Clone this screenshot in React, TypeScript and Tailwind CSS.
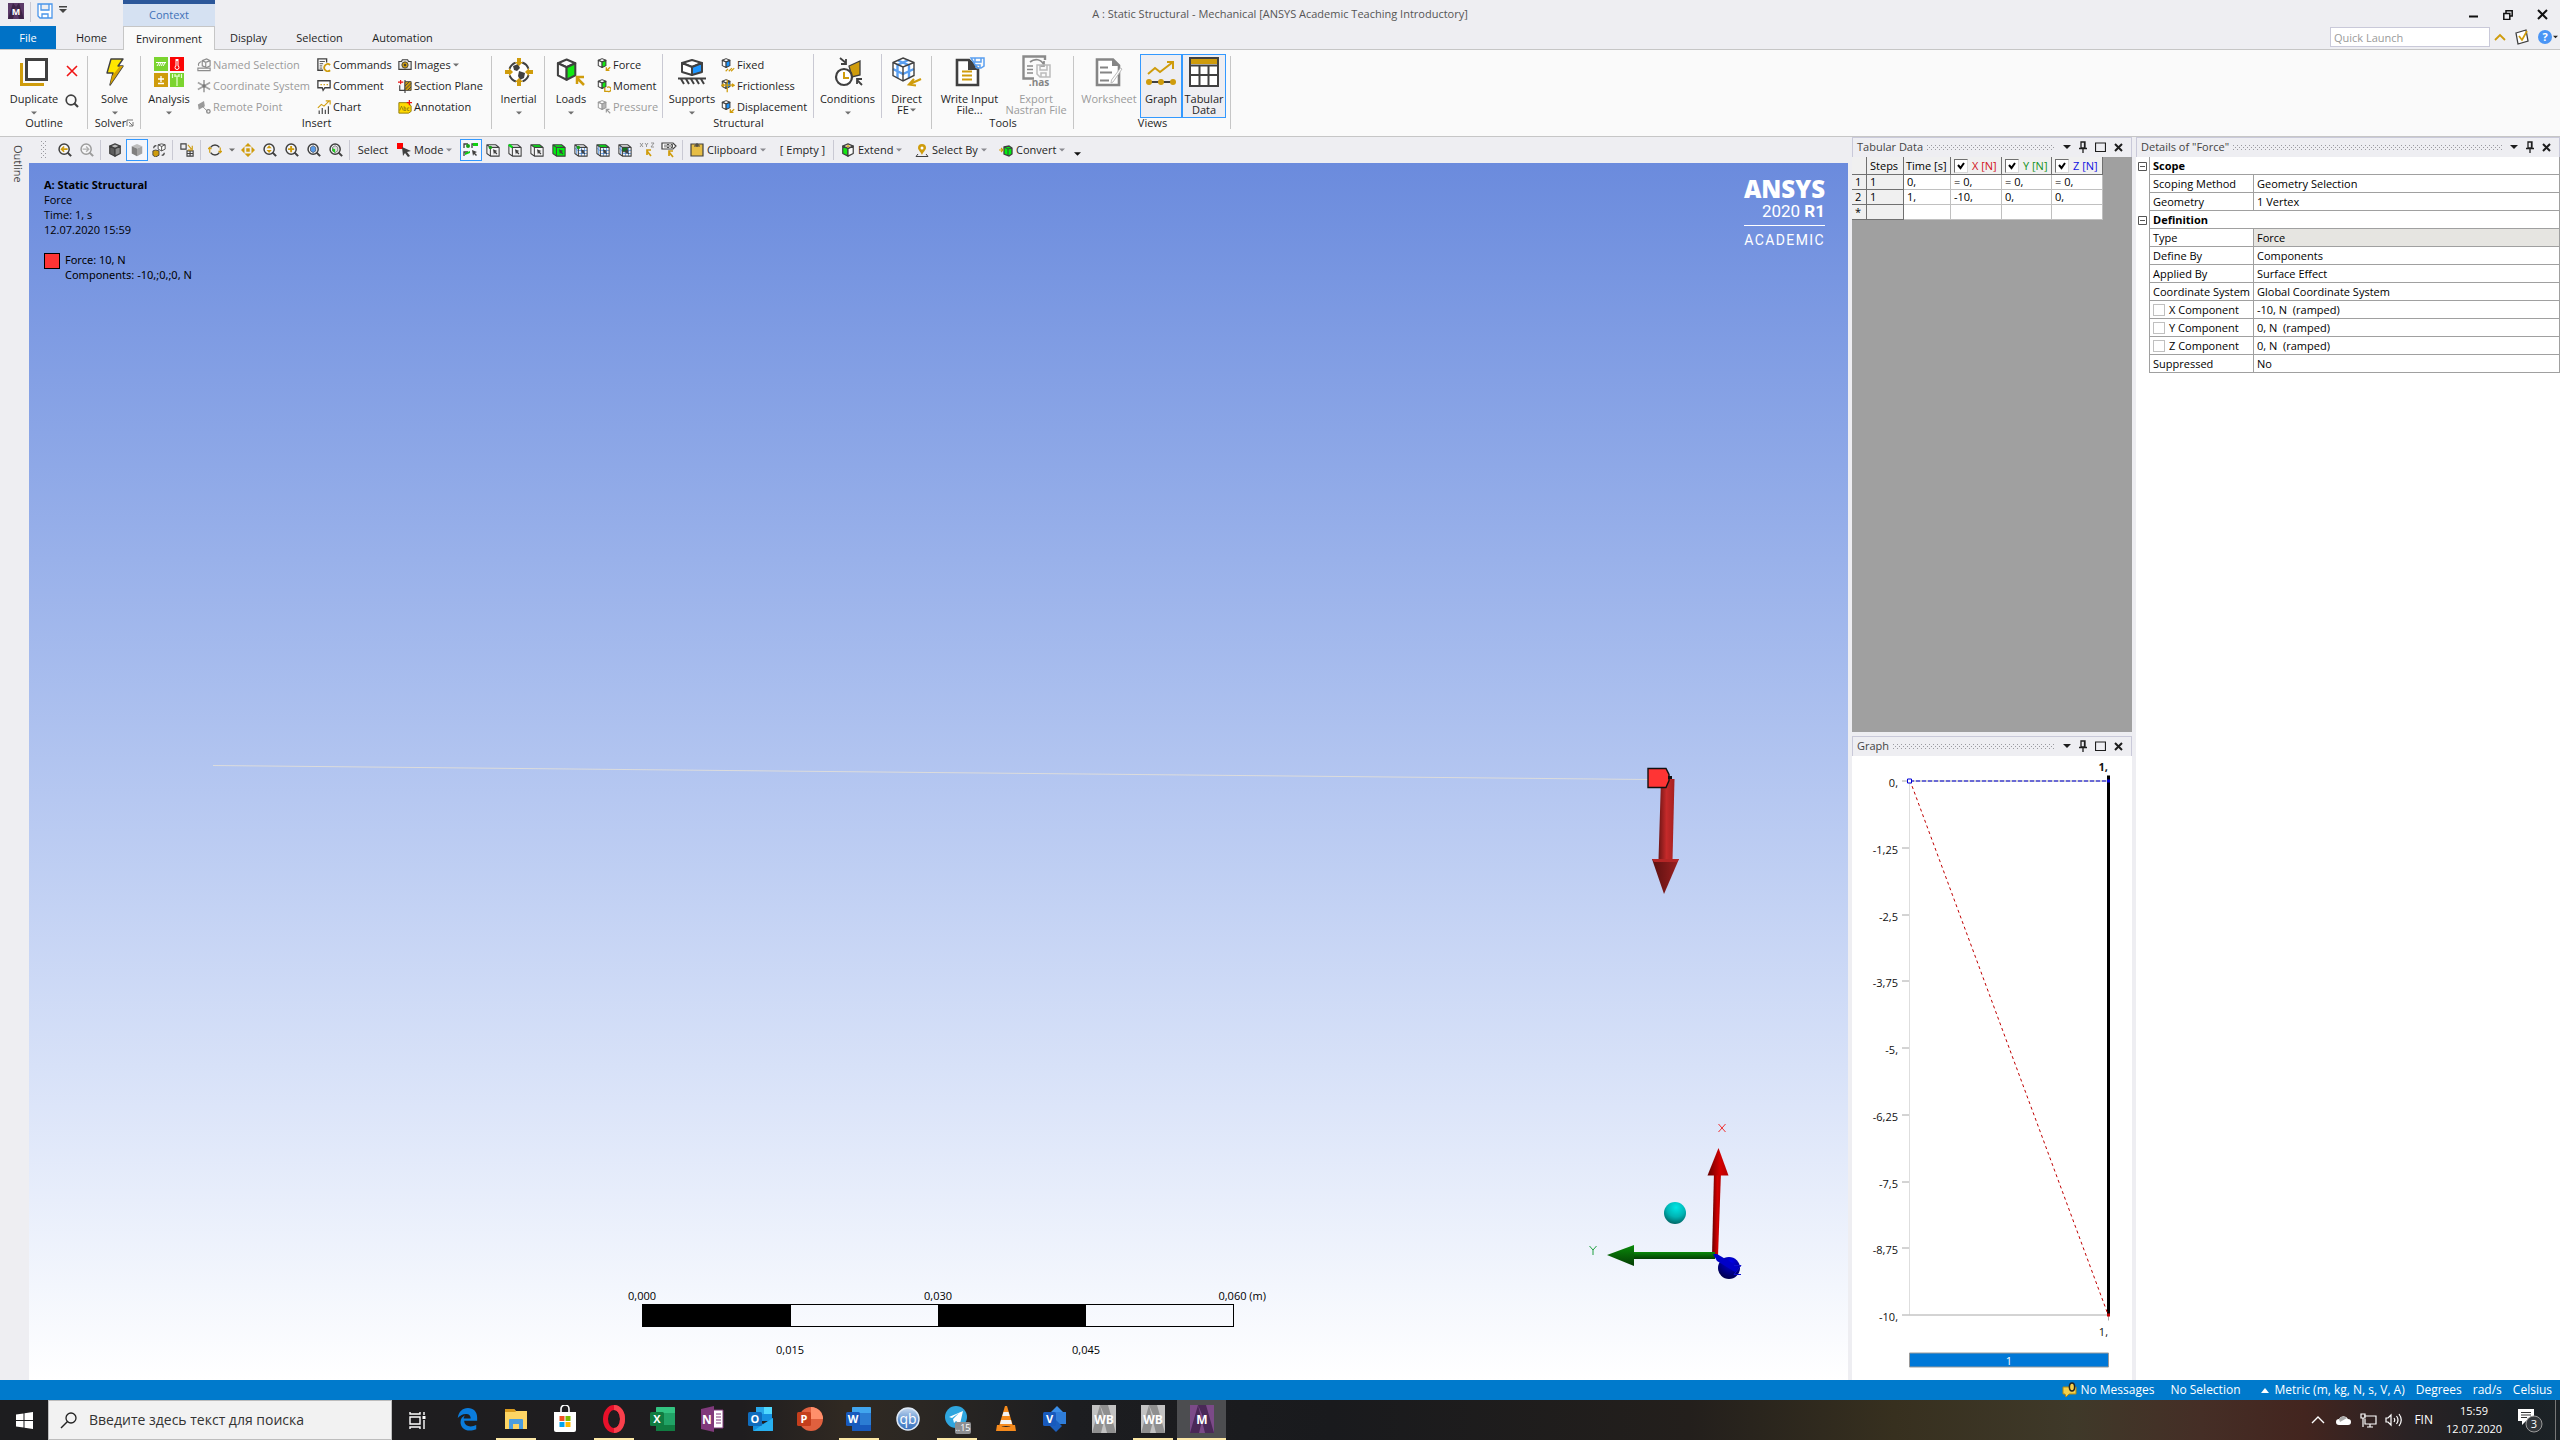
import React from "react";

const INK = "#404040";
const GOLD = "#cf9c0c";
const GREEN = "#12e812";
const BLUE = "#1e96ff";

type Kids = { children?: React.ReactNode };

function Svg({ w, h, vb, children }: Kids & { w: number; h?: number; vb?: string }) {
  const hh = h ?? w;
  return (
    <svg width={w} height={hh} viewBox={vb ?? `0 0 ${w} ${hh}`} fill="none" className="block shrink-0" aria-hidden="true">
      {children}
    </svg>
  );
}

function Caret({ color = "#6f6f6f", w = 7 }: { color?: string; w?: number }) {
  return (
    <svg width={w} height={4} viewBox="0 0 8 4" className="block shrink-0" aria-hidden="true">
      <path d="M0 0h8L4 4z" fill={color} />
    </svg>
  );
}

/* ---------- cube family ---------- */

function CubeShape({ top = "#fafafa", left = "#fafafa", right = "#fafafa", stroke = INK, sw = 1.4 }: { top?: string; left?: string; right?: string; stroke?: string; sw?: number }) {
  return (
    <g stroke={stroke} strokeWidth={sw} strokeLinejoin="round">
      <path d="M8 1l6 2.6L8 6.4 2 3.6z" fill={top} />
      <path d="M2 3.6l6 2.8V15l-6-3z" fill={left} />
      <path d="M14 3.6L8 6.4V15l6-3z" fill={right} />
    </g>
  );
}

function SmallCube({ right, disabled, kind }: { right: string; disabled?: boolean; kind: "arrow" | "turn" | "ground" | "press" | "slide" }) {
  const c = disabled ? "#9a9a9a" : GOLD;
  return (
    <Svg w={14} vb="0 0 18 18">
      <g transform="scale(.82)">
        <CubeShape right={right} stroke={disabled ? "#9a9a9a" : INK} sw={1.6} />
      </g>
      {kind === "arrow" && <path d="M17 12l-5 4m0-4v4h4" stroke={c} strokeWidth="1.7" />}
      {kind === "turn" && <path d="M10 11v5h4a3 3 0 1 0-1-5" stroke={c} strokeWidth="1.7" />}
      {kind === "ground" && <path d="M6 17l3-3m1 3l4-4m-1 4l4-4" stroke={c} strokeWidth="1.5" />}
      {kind === "press" && <path d="M17 17l-5-5m0 4v-4h4" stroke={c} strokeWidth="1.5" />}
      {kind === "slide" && <path d="M1 8h16M8 1v16m6-11l3 2-3 2M4 6L1 8l3 2" stroke={c} strokeWidth="1.6" />}
    </Svg>
  );
}

const Cursor = ({ x = 7, y = 7, c = INK }: { x?: number; y?: number; c?: string }) => (
  <path transform={`translate(${x} ${y})`} d="M0 0l5 2-2 1 2 2-1 1-2-2-1 2z" fill={c} />
);

function PickCube({ kind }: { kind: "vertex" | "edge" | "face" | "body" | "node" | "nface" | "element" }) {
  const mesh = kind === "node" || kind === "nface" || kind === "element";
  return (
    <Svg w={14} vb="0 0 16 16">
      <path d="M1 2h10l4 3v10H5l-4-3z" fill={kind === "body" ? "#00f010" : "#f4f4f6"} />
      {(kind === "face" || kind === "nface") && <path d="M1 2h10l4 3H5z" fill="#00f010" />}
      {mesh && <path d="M5 8.500h10M5 12h10M8.500 5v10M12 5v10M3 3.500V13M1 6l4 3" stroke="#5a9ae8" strokeWidth="1" />}
      <path d="M1 2h10l4 3v10H5l-4-3zM1 2l4 3h10M5 5v10" stroke={INK} strokeWidth="1.200" strokeLinejoin="round" />
      {(kind === "vertex" || kind === "node") && <circle cx="5" cy="5" r="2" fill="#1a9c1a" />}
      {kind === "edge" && <path d="M1 2l4 3" stroke="#00e010" strokeWidth="2.600" />}
      {kind === "element" && <path d="M5 5h6v5H5z" fill="#0f7a1f" stroke={INK} />}
      <Cursor x={8} y={7} />
    </Svg>
  );
}

function Lens({ children, gray }: Kids & { gray?: boolean }) {
  const c = gray ? "#9c9c9c" : INK;
  return (
    <Svg w={14} vb="0 0 16 16">
      <circle cx="7" cy="7" r="5.800" stroke={c} strokeWidth="1.700" fill="#f6f6f8" />
      <path d="M11 11l4 4" stroke={c} strokeWidth="2.400" />
      {children}
    </Svg>
  );
}

/* ---------- ribbon icons ---------- */

const DuplicateIcon = () => (
  <Svg w={30}>
    <path d="M2.500 6v21.500H25" stroke={GOLD} strokeWidth="3" />
    <path d="M7.500 2.500h20v20h-20z" stroke={INK} strokeWidth="3" fill="#fff" />
  </Svg>
);
const SolveIcon = () => (
  <Svg w={20} h={30}>
    <path d="M6 2h12l-5 7h5L5 28l3-12H2z" fill="#ffe600" stroke={INK} strokeWidth="1.400" strokeLinejoin="round" />
    <path d="M15 9h3L5 28l2-9z" fill="#d8a400" />
  </Svg>
);
const AnalysisIcon = () => (
  <Svg w={30}>
    <path d="M0 0h14v14H0z" fill="#7bd42f" />
    <path d="M16 0h14v14H16z" fill="#fb0505" />
    <path d="M0 16h14v14H0z" fill="#cf9c0c" />
    <path d="M16 16h14v14H16z" fill="#7bd42f" />
    <path d="M2 5.500h10M3 9l2-3m0 3l2-3m0 3l2-3m0 3l2-3" stroke="#fff" />
    <path d="M23 2v7" stroke="#fff" strokeWidth="3" />
    <circle cx="23" cy="10.500" r="2" stroke="#fff" fill="#fb0505" />
    <path d="M23 4v6" stroke="#fb0505" />
    <path d="M4 22h6M7 19v6M4 26.500h6" stroke="#fff" strokeWidth="1.300" />
    <path d="M18.500 17v4m2.500-4v3m6.500-3v4M25 17v3M23 19v10M21 19h4" stroke="#e6ffd0" strokeWidth="1.200" />
  </Svg>
);
const InertialIcon = () => (
  <Svg w={30}>
    <circle cx="15" cy="15" r="10" stroke={INK} strokeWidth="2" fill="#fff" strokeDasharray="9 6.700" strokeDashoffset="-3" />
    <path d="M9 9l5-2 2 4-3 3-3-1zM15 14l6 2-1 5-4 2-2-4z" fill={INK} />
    <path d="M13 1h4v5h-4zM13 24h4v5h-4zM1 13h5v4H1zM24 13h5v4h-5z" fill={GOLD} />
    <path d="M11 5h8l-4 4zM11 25h8l-4-4zM5 11v8l4-4zM25 11v8l-4-4z" fill={GOLD} />
  </Svg>
);
const LoadsIcon = () => (
  <Svg w={30}>
    <g transform="translate(-1 1) scale(1.45)">
      <CubeShape right={GREEN} />
    </g>
    <path d="M28 28l-7-7m0 6v-7h7" stroke={GOLD} strokeWidth="2.500" />
  </Svg>
);
const SupportsIcon = () => (
  <Svg w={30}>
    <g stroke={INK} strokeWidth="2" strokeLinejoin="round">
      <path d="M15 3l10 3-10 4L5 6z" fill="#fff" />
      <path d="M5 6l10 4v8L5 15z" fill="#fff" />
      <path d="M25 6l-10 4v8l10-3z" fill={BLUE} />
      <path d="M1 21.500h28M4 22l3 5m2-5l3 5m2-5l3 5m2-5l3 5m2-5l3 5" />
    </g>
  </Svg>
);
const ConditionsIcon = () => (
  <Svg w={30}>
    <path d="M16 9l11-5v14l-8 2z" fill={GOLD} stroke={INK} strokeWidth="1.300" />
    <circle cx="11" cy="20" r="8" fill="#fff" stroke={INK} strokeWidth="2.200" />
    <path d="M11 15v6h5" stroke={GOLD} strokeWidth="2" />
    <path d="M7 1l6 5m0-4v5H8M29 28l-5-5m0 4v-5h5" stroke={INK} strokeWidth="1.800" />
  </Svg>
);
const DirectIcon = () => (
  <Svg w={30}>
    <path d="M11 1l11 4.500v13L11 24 1 18.500v-13z" fill="#fff" />
    <path d="M6 3.500l11 4.700v13M16.500 3L5.500 8v13M1 12l10 5 11-5" stroke="#5a9ff0" strokeWidth="2.400" />
    <path d="M11 1l11 4.500v13L11 24 1 18.500v-13zM1 5.500L11 10l11-4.500M11 10v14" stroke={INK} strokeWidth="1.400" />
    <path d="M29 22l-11 5m4-5l-5 5.500 7 1" stroke={GOLD} strokeWidth="2.200" />
  </Svg>
);
const WriteIcon = () => (
  <Svg w={30}>
    <path d="M2 3h12l9 9v16H2z" fill="#fff" stroke={INK} strokeWidth="2.600" />
    <path d="M13 3h2l8 8v2H13z" fill={INK} />
    <path d="M7 14.500h10M7 18.500h10M7 22.500h10" stroke={GOLD} strokeWidth="1.800" />
    <path d="M16 1h13v8l-3 2h-4zM20 1v4h6V1M21 11V8h4v3" stroke="#5a9ff0" strokeWidth="1.500" />
  </Svg>
);
const NastranIcon = () => (
  <svg width="30" height="32" viewBox="0 0 30 32" fill="none" className="block shrink-0 overflow-visible" aria-hidden="true">
    <path d="M24 5V1.500H2.500v22H13" stroke="#8a8a8a" strokeWidth="2.400" />
    <path d="M6 11h6M6 14.500h6M6 18h6M9 7c5-4 11-3 14 3m0-4v5h-5" stroke="#8a8a8a" strokeWidth="1.700" />
    <path d="M16 10h13v12H19l-3-3zM19 10v5h7v-5M20 22v-4h5v4" stroke="#bcbcbc" strokeWidth="1.500" fill="#fafafa" />
    <text x="18" y="31" textAnchor="middle" fontSize="10" fontWeight="700" fill="#858585" fontFamily="Open Sans, sans-serif">.nas</text>
  </svg>
);
const WorksheetIcon = () => (
  <Svg w={30}>
    <path d="M3 2.500h16l6 6V28H3z" fill="#fff" stroke="#858585" strokeWidth="2.600" />
    <path d="M18 2v7h7z" fill="#858585" />
    <path d="M6 10.500h8M6 15.500h12M6 23.500h9" stroke="#858585" strokeWidth="1.800" />
    <path d="M28 12l-9 13-2 1 .5-3 9-12z" fill="#fff" stroke="#bcbcbc" />
  </Svg>
);
const GraphIcon = () => (
  <Svg w={30}>
    <path d="M2 17l7-6 5 4 13-10M21 5h6v7" stroke={GOLD} strokeWidth="2" />
    <path d="M3 25h24" stroke={INK} strokeWidth="2" />
    <circle cx="3" cy="25" r="3" fill={GOLD} />
    <circle cx="15" cy="25" r="3" fill={GOLD} />
    <circle cx="27" cy="25" r="3" fill={GOLD} />
  </Svg>
);
const TableIcon = () => (
  <Svg w={30}>
    <path d="M1 1h28v28H1z" fill="#fff" stroke={INK} strokeWidth="2" />
    <path d="M2 2h26v5H2z" fill={GOLD} />
    <path d="M1 8.500h28M1 18h28M10.500 9v19M19.500 9v19" stroke={INK} strokeWidth="2" />
  </Svg>
);

const NamedSel = () => (
  <Svg w={14} vb="0 0 16 16">
    <path d="M6 3l5-2 4 2v6l-4 2-5-2zM6 3l4 2 5-2M10 5v6" stroke="#8d8d8d" strokeWidth="1.300" />
    <path d="M5 4C2 5 1 7 2 9M1 11.500h14v3H1z" stroke="#8d8d8d" strokeWidth="1.300" />
  </Svg>
);
const CoordSys = () => (
  <Svg w={14} vb="0 0 16 16">
    <path d="M8 1v14M1 4l14 8M15 4L1 12" stroke="#a4a4a4" strokeWidth="2" />
    <circle cx="8" cy="8" r="2" fill="#777" />
  </Svg>
);
const RemotePt = () => (
  <Svg w={14} vb="0 0 16 16">
    <path d="M1 5l7-4 1 6-7 4z" fill="#9a9a9a" />
    <path d="M6 7l6 6" stroke="#888" />
    <circle cx="13" cy="13" r="2" stroke="#888" strokeWidth="1.400" />
  </Svg>
);
const CommandsIcon = () => (
  <Svg w={14} vb="0 0 16 16">
    <path d="M11 5V1H1v13h6" stroke={INK} strokeWidth="1.500" />
    <path d="M3 4h6M3 6.500h4M3 9h3M3 11.500h3" stroke={INK} />
    <path d="M15 8a4 4 0 1 0 0 6" stroke={GOLD} strokeWidth="2" />
  </Svg>
);
const CommentIcon = () => (
  <Svg w={14} vb="0 0 16 16">
    <path d="M1 2h14v8H9l-2 3-1-3H1z" stroke={INK} strokeWidth="1.500" fill="#fff" />
    <path d="M4 6.500h1.500m2 0H9m2 0h1.500" stroke={GOLD} strokeWidth="1.300" />
  </Svg>
);
const ChartIcon = () => (
  <Svg w={14} vb="0 0 16 16">
    <path d="M2.500 16v-4m3.500 4V9m3.500 7v-5m3.500 5V7" stroke={INK} strokeWidth="1.300" />
    <path d="M1 9l4-4 3 2 6-6m-4 0h5v4" stroke={GOLD} strokeWidth="1.300" />
  </Svg>
);
const ImagesIcon = () => (
  <Svg w={14} vb="0 0 16 16">
    <path d="M1 4h3l1-2h6l1 2h3v9H1z" stroke={INK} strokeWidth="1.300" fill="#eee" />
    <circle cx="8" cy="8" r="3.600" fill={GOLD} stroke={INK} />
    <circle cx="8" cy="8" r="1.400" fill={INK} />
  </Svg>
);
const SectionIcon = () => (
  <Svg w={14} vb="0 0 16 16">
    <path d="M2 7v6h6M8 1v15" stroke={INK} strokeWidth="1.300" />
    <path d="M8 3h7v10H8z" fill={GOLD} stroke={INK} />
    <path d="M8 8l5-5M8 12l7-7M11 13l4-4" stroke={INK} />
    <path d="M0 3.500h6M3 1v5" stroke="#e11" strokeWidth="1.300" />
  </Svg>
);
const AnnotationIcon = () => (
  <Svg w={14} vb="0 0 16 16">
    <path d="M1 3h11l3 4v6L12 15H1z" fill="#ffd900" stroke="#8a7300" />
    <path d="M2 12l2-5 2 5m1-5v5h2V9H7m6 0h-2v3h2" stroke="#7d6a10" strokeWidth=".8" />
    <path d="M10 3h6M13 0v6" stroke="#e11" strokeWidth="1.400" />
  </Svg>
);

/* ---------- ribbon pieces ---------- */

function BigButton({ icon, lines, caret, inlineCaret, disabled, active, width }: { icon: React.ReactNode; lines: string[]; caret?: boolean; inlineCaret?: boolean; disabled?: boolean; active?: boolean; width: string }) {
  return (
    <button
      disabled={disabled}
      className={`flex h-16 shrink-0 flex-col items-center border whitespace-nowrap ${width} ${active ? "border-[#3399ff] bg-[#eeeef2]" : "border-transparent"} ${disabled ? "text-[#9a9a9a]" : "text-[#1e1e1e]"}`}
    >
      <span className="flex h-8 items-end">{icon}</span>
      <span className="mt-[5px] flex flex-col items-center pt-px leading-[11px]">
        {lines.map((l, i) => (
          <span key={l} className="flex items-center gap-px">
            {l}
            {inlineCaret && i === lines.length - 1 && <Caret w={6} />}
          </span>
        ))}
      </span>
      {caret && (
        <span className="mt-[7px]">
          <Caret w={6} />
        </span>
      )}
    </button>
  );
}

function SmallButton({ icon, label, disabled, caret }: { icon: React.ReactNode; label: string; disabled?: boolean; caret?: boolean }) {
  return (
    <button disabled={disabled} className={`flex h-[21px] items-center gap-0.5 whitespace-nowrap ${disabled ? "text-[#9a9a9a]" : "text-[#1e1e1e]"}`}>
      {icon}
      <span>{label}</span>
      {caret && <Caret w={6} />}
    </button>
  );
}

function Group({ title, width, children, launcher }: Kids & { title?: string; width: string; launcher?: boolean }) {
  return (
    <section className={`flex shrink-0 flex-col pt-1 ${width}`}>
      <div className="relative flex h-full flex-col after:absolute after:top-0.5 after:right-0 after:h-[73px] after:w-px after:bg-[#c6c6c6]">
        <div className="flex h-16">{children}</div>
        <div className="flex h-[10px] items-center justify-center leading-[10px] text-[#1e1e1e]">
          {title}
          {launcher && (
            <Svg w={8}>
              <path d="M1 7V1h6M3 3l4 4M7 3v4H3" stroke="#777" />
            </Svg>
          )}
        </div>
      </div>
    </section>
  );
}

const InnerSep = () => <span className="h-16 w-px shrink-0 bg-[#c9c9d3]" />;

function Ribbon() {
  return (
    <div className="flex h-[87px] shrink-0 overflow-hidden border-b border-[#c6c6c6] bg-[#fafafa]">
      <Group title="Outline" width="w-[88px]">
        <div className="flex pl-1">
          <BigButton icon={<DuplicateIcon />} lines={["Duplicate"]} caret width="w-[60px]" />
          <div className="flex w-4 flex-col items-center justify-between pt-[11px] pb-[10px]">
            <button aria-label="Delete">
              <Svg w={12}>
                <path d="M1 1l10 10M11 1L1 11" stroke="#f01414" strokeWidth="1.600" />
              </Svg>
            </button>
            <button aria-label="Find">
              <Svg w={14}>
                <circle cx="6" cy="6" r="4.800" stroke={INK} strokeWidth="1.700" />
                <path d="M9 9l4 4" stroke={INK} strokeWidth="2.200" />
              </Svg>
            </button>
          </div>
        </div>
      </Group>
      <Group title="Solver" width="w-[53px]" launcher>
        <BigButton icon={<SolveIcon />} lines={["Solve"]} caret width="w-full" />
      </Group>
      <Group title="Insert" width="w-[351px]">
        <div className="flex pl-1">
          <BigButton icon={<AnalysisIcon />} lines={["Analysis"]} caret width="w-[48px]" />
          <div className="ml-1 flex">
            <div className="w-[120px]">
              <SmallButton icon={<NamedSel />} label="Named Selection" disabled />
              <SmallButton icon={<CoordSys />} label="Coordinate System" disabled />
              <SmallButton icon={<RemotePt />} label="Remote Point" disabled />
            </div>
            <div className="w-[81px]">
              <SmallButton icon={<CommandsIcon />} label="Commands" />
              <SmallButton icon={<CommentIcon />} label="Comment" />
              <SmallButton icon={<ChartIcon />} label="Chart" />
            </div>
            <div>
              <SmallButton icon={<ImagesIcon />} label="Images" caret />
              <SmallButton icon={<SectionIcon />} label="Section Plane" />
              <SmallButton icon={<AnnotationIcon />} label="Annotation" />
            </div>
          </div>
        </div>
      </Group>
      <Group width="w-[53px]">
        <BigButton icon={<InertialIcon />} lines={["Inertial"]} caret width="w-full" />
      </Group>
      <Group title="Structural" width="w-[387px]">
        <div className="flex">
          <BigButton icon={<LoadsIcon />} lines={["Loads"]} caret width="w-[52px]" />
          <div className="w-[65px]">
            <SmallButton icon={<SmallCube right={GREEN} kind="arrow" />} label="Force" />
            <SmallButton icon={<SmallCube right={GREEN} kind="turn" />} label="Moment" />
            <SmallButton icon={<SmallCube right="#b5b5b5" kind="press" disabled />} label="Pressure" disabled />
          </div>
          <InnerSep />
          <BigButton icon={<SupportsIcon />} lines={["Supports"]} caret width="w-[58px]" />
          <div className="w-[92px]">
            <SmallButton icon={<SmallCube right={BLUE} kind="ground" />} label="Fixed" />
            <SmallButton icon={<SmallCube right={BLUE} kind="slide" />} label="Frictionless" />
            <SmallButton icon={<SmallCube right={BLUE} kind="arrow" />} label="Displacement" />
          </div>
          <InnerSep />
          <BigButton icon={<ConditionsIcon />} lines={["Conditions"]} caret width="w-[67px]" />
          <InnerSep />
          <BigButton icon={<DirectIcon />} lines={["Direct", "FE"]} inlineCaret width="w-[49px]" />
        </div>
      </Group>
      <Group title="Tools" width="w-[142px]">
        <div className="flex pl-1">
          <BigButton icon={<WriteIcon />} lines={["Write Input", "File..."]} width="w-[67px]" />
          <BigButton icon={<NastranIcon />} lines={["Export", "Nastran File"]} width="w-[66px]" disabled />
        </div>
      </Group>
      <Group title="Views" width="w-[157px]">
        <div className="flex pl-1">
          <BigButton icon={<WorksheetIcon />} lines={["Worksheet"]} width="w-[62px]" disabled />
          <BigButton icon={<GraphIcon />} lines={["Graph"]} width="w-[42px]" active />
          <BigButton icon={<TableIcon />} lines={["Tabular", "Data"]} width="w-[44px]" active />
        </div>
      </Group>
    </div>
  );
}

/* ---------- graphics toolbar ---------- */

function Tool({ label, active, children }: Kids & { label: string; active?: boolean }) {
  return (
    <button aria-label={label} className={`flex h-[22px] w-[22px] shrink-0 items-center justify-center border ${active ? "border-[#3399ff] bg-[#f4f6fb]" : "border-transparent"}`}>
      {children}
    </button>
  );
}
const Sep = () => <span className="mx-[2px] h-5 w-px shrink-0 border-l border-[#c9c9d3] pr-px" />;

function TextTool({ icon, label, width }: { icon: React.ReactNode; label: string; width: string }) {
  return (
    <button className={`flex h-[22px] shrink-0 items-center gap-[3px] whitespace-nowrap pl-1 ${width}`}>
      {icon}
      {label}
      <Caret color="#8a8a90" w={6} />
    </button>
  );
}

function Toolbar() {
  return (
    <div className="flex h-[26px] shrink-0 items-center overflow-hidden bg-[#eeeef2] text-[#1e1e1e]">
      <span className="flex w-[25px] shrink-0 justify-end pr-[7px]">
        <Svg w={6} h={18}>
          {[0, 4, 8, 12, 16].map((y) => (
            <path key={y} d={`M0 ${y}h1v1H0zM4 ${y}h1v1H4zM2 ${y + 2}h1v1H2z`} fill="#9a9aa0" />
          ))}
        </Svg>
      </span>
      <Tool label="Previous view"><Lens><path d="M11 7H4m3-3L4 7l3 3" stroke={GOLD} strokeWidth="1.800" /></Lens></Tool>
      <Tool label="Next view"><Lens gray><path d="M3 7h7M7 4l3 3-3 3" stroke="#b0b0b0" strokeWidth="1.600" /></Lens></Tool>
      <Sep />
      <Tool label="Shaded exterior and edges"><Svg w={14} vb="0 0 16 16"><CubeShape top="#b9b9b9" left="#5d5d5d" right="#8a8a8a" /></Svg></Tool>
      <Tool label="Shaded exterior" active><Svg w={14} vb="0 0 16 16"><CubeShape top="#bdbdbd" left="#7f7f7f" right="#a3a3a3" stroke="none" /></Svg></Tool>
      <Tool label="Swap display">
        <Svg w={14} vb="0 0 16 16">
          <path d="M7 2l4-1 4 1v5l-4 2-4-2zM7 2l4 2 4-2M11 4v5" stroke={INK} fill="#fff" />
          <path d="M1 9l3-1 4 1v5l-4 2-3-2z" fill={GOLD} stroke={INK} />
          <path d="M2 6c0-2 1-3 3-3M14 11c0 2-1 3-3 3" stroke={INK} strokeWidth="1.300" />
        </Svg>
      </Tool>
      <Sep />
      <Tool label="Viewports">
        <Svg w={14} vb="0 0 16 16">
          <path d="M1 1h6v6H1zM8 9h7v6H8zM11.500 9v6M8 12h7" stroke={INK} strokeWidth="1.300" />
          <path d="M9 2l4 5m1-4v5H9" stroke={GOLD} strokeWidth="1.300" />
        </Svg>
      </Tool>
      <Sep />
      <Tool label="Rotate">
        <Svg w={14} vb="0 0 16 16">
          <path d="M3 5a6 6 0 0 1 10 0M13 11a6 6 0 0 1-10 0" stroke={INK} strokeWidth="1.600" />
          <path d="M2 6v5M14 5v5M0 7l2-2 2 2M12 9l2 2 2-2" stroke={GOLD} strokeWidth="1.300" />
        </Svg>
      </Tool>
      <button aria-label="Rotate options" className="flex w-[11px] shrink-0 justify-center"><Caret w={6} /></button>
      <Tool label="Pan">
        <Svg w={14} vb="0 0 16 16">
          <path d="M8 0l4 4H4zM8 16l4-4H4zM0 8l4-4v8zM16 8l-4-4v8z" fill={GOLD} />
          <path d="M6 6h4v4H6z" fill={GOLD} />
        </Svg>
      </Tool>
      <Tool label="Zoom"><Lens><path d="M7 2.500L10 6H4zM7 11.500L10 8H4z" fill={GOLD} /></Lens></Tool>
      <Tool label="Box zoom"><Lens><path d="M3.500 7h7M7 3.500v7" stroke={GOLD} strokeWidth="2.200" /></Lens></Tool>
      <Tool label="Zoom to fit"><Lens><path d="M7 3l3 2v4l-3 2-3-2V5z" fill="#5a9ae8" stroke={INK} strokeWidth=".7" /></Lens></Tool>
      <Tool label="Zoom to selection"><Lens><path d="M7 3l3 2v4l-3 2-3-2V5z" fill="#ddd" stroke={INK} strokeWidth=".7" /><path d="M4 6l3 1v4L4 9z" fill="#1ad01a" /></Lens></Tool>
      <Sep />
      <span className="w-[40px] shrink-0 text-center">Select</span>
      <TextTool
        width="w-[67px]"
        icon={<Svg w={14}><path d="M0 0h6v6H0z" fill="#f00" /><path d="M5 4l9 4-4 1 3 4-2 1-3-4-2 3z" fill={INK} /></Svg>}
        label="Mode"
      />
      <Tool label="Smart select" active>
        <Svg w={16}>
          <path d="M1 6V2h4M9 6V2h5M1 14v-4h4" stroke={INK} strokeWidth="1.300" />
          <circle cx="5" cy="4" r="2" fill="#18a018" />
          <path d="M10 1h5v3h-5zM2 11l5-2v2l-5 2z" fill="#10d010" />
          <Cursor x={9} y={8} />
        </Svg>
      </Tool>
      <Tool label="Vertex"><PickCube kind="vertex" /></Tool>
      <Tool label="Edge"><PickCube kind="edge" /></Tool>
      <Tool label="Face"><PickCube kind="face" /></Tool>
      <Tool label="Body"><PickCube kind="body" /></Tool>
      <Tool label="Node"><PickCube kind="node" /></Tool>
      <Tool label="Element face"><PickCube kind="nface" /></Tool>
      <Tool label="Element"><PickCube kind="element" /></Tool>
      <Tool label="Hit point coordinates">
        <Svg w={16}>
          <path d="M1 1l3 4m0-4L1 5m5-4l1.500 2L9 1M7.500 3v2M12 1h3l-3 4h3" stroke="#8a8a8a" strokeWidth=".9" />
          <path d="M12 14L8 9m0 4V8h4" stroke={GOLD} strokeWidth="1.700" />
        </Svg>
      </Tool>
      <Tool label="Label">
        <Svg w={16}>
          <path d="M1 1h11l3 3-3 3H1z" fill="#fff" stroke={INK} strokeWidth="1.200" />
          <path d="M4 2.500v3M6 2.500h2v3H6zM10 2.500h1.500v3H10z" stroke={INK} strokeWidth=".9" />
          <path d="M12 15L8 10m0 4V9h4" stroke={GOLD} strokeWidth="1.700" />
        </Svg>
      </Tool>
      <Sep />
      <TextTool
        width="w-[88px]"
        icon={<Svg w={14}><path d="M1 1h12v12H1z" fill="#e6bd45" stroke={INK} strokeWidth="1.200" /><path d="M4 3h6M6 1h2v2H6z" stroke={INK} /></Svg>}
        label="Clipboard"
      />
      <span className="w-[57px] shrink-0 text-center whitespace-nowrap">[ Empty ]</span>
      <Sep />
      <TextTool
        width="w-[74px]"
        icon={<Svg w={14} vb="0 0 16 16"><CubeShape left={GREEN} /><path d="M6 3.600h4M8 2v3" stroke={GOLD} strokeWidth="1.200" /></Svg>}
        label="Extend"
      />
      <TextTool
        width="w-[84px]"
        icon={<Svg w={14}><path d="M7 1a4 4 0 0 1 4 4c0 2-3 4-4 7-1-3-4-5-4-7a4 4 0 0 1 4-4z" fill={GOLD} /><circle cx="7" cy="5" r="1.500" fill="#fff" /><path d="M3 11l-2 2.500h12L11 11" stroke={INK} /></Svg>}
        label="Select By"
      />
      <TextTool
        width="w-[79px]"
        icon={<Svg w={14}><path d="M5 4l5-1 3 2v6l-3 2-5-2z" fill="#00f010" stroke={INK} strokeWidth="1.300" /><path d="M5 4l4 2 4-1M9 6v7" stroke={INK} /><path d="M0 7h4M2 5l2 2-2 2" stroke={GOLD} strokeWidth="1.200" /></Svg>}
        label="Convert"
      />
      <button aria-label="Toolbar options" className="pt-2"><Caret color="#111" w={7} /></button>
    </div>
  );
}

/* ---------- window header ---------- */

function Header() {
  return (
    <header className="grid h-[50px] shrink-0 grid-cols-[1fr_auto_1fr] border-b border-[#c6c6c6] bg-[#eeeef2]">
      <div className="-mb-px flex flex-col">
        <div className="flex h-[26px] shrink-0">
          <div className="flex w-[123px] items-start gap-[6px] pt-0.5 pl-2">
            <span className="mt-px">
              <Svg w={16}>
                <path d="M0 0h16v16H0z" fill="#5b3a68" />
                <path d="M5 0L0 16h5l3-12zM11 0l5 16h-5L8 4z" fill="#3c2347" />
                <text x="8" y="11.500" textAnchor="middle" fontSize="9" fontWeight="700" fill="#fff" fontFamily="Open Sans, sans-serif">M</text>
              </Svg>
            </span>
            <span className="h-5 w-px bg-[#c9c9d3]" />
            <button aria-label="Save" className="mt-px">
              <Svg w={16}>
                <path d="M1 1h14v14H3l-2-2zM4 1v6h8V1M5 15v-4h6v4" stroke="#4a95ea" strokeWidth="1.300" fill="#fff" />
              </Svg>
            </button>
            <button aria-label="Customize" className="mt-1">
              <Svg w={8} h={7}><path d="M0 0h8v1.500H0zM0 3h8L4 7z" fill="#444" /></Svg>
            </button>
          </div>
          <div className="flex w-[92px] items-center justify-center border-t-4 border-[#2b579a] bg-[#d5e1f2] text-[#4172b8]">Context</div>
        </div>
        <nav className="flex h-6 shrink-0 items-center text-[#1e1e1e]">
          <button className="h-[23px] w-[56px] self-start bg-[#0072c6] text-white">File</button>
          <button className="w-[67px] pl-1">Home</button>
          <button className="h-6 w-[92px] border-x border-t border-[#c6c6c6] bg-[#fafafa]">Environment</button>
          <button className="w-[67px]">Display</button>
          <button className="w-[75px]">Selection</button>
          <button className="w-[91px]">Automation</button>
        </nav>
      </div>
      <h1 className="pt-1.5 whitespace-nowrap text-[#555]">A : Static Structural - Mechanical [ANSYS Academic Teaching Introductory]</h1>
      <div className="flex flex-col items-end">
        <div className="flex h-[27px] items-center gap-6 pt-0.5 pr-3">
          <button aria-label="Minimize"><Svg w={10}><path d="M0 6.500h9" stroke="#111" strokeWidth="2" /></Svg></button>
          <button aria-label="Restore"><Svg w={10}><path d="M3 3V.8h6.200V6H7M.8 3.500h6v6h-6z" stroke="#111" strokeWidth="1.500" /></Svg></button>
          <button aria-label="Close"><Svg w={11}><path d="M1 1l9 9M10 1l-9 9" stroke="#111" strokeWidth="2" /></Svg></button>
        </div>
        <div className="flex items-center gap-1 pr-0.5">
          <input aria-label="Quick Launch" placeholder="Quick Launch" className="h-5 w-[160px] border border-[#c9c9d9] bg-white px-[3px] placeholder:text-[#9a9a9a]" />
          <button aria-label="Collapse ribbon"><Svg w={12}><path d="M1 9l5-5 5 5" stroke={GOLD} strokeWidth="1.800" /></Svg></button>
          <button aria-label="Checklist" className="ml-1"><Svg w={16}><path d="M2 4l10-3 2 11-10 3z" stroke={INK} strokeWidth="1.300" fill="#fff" /><path d="M5 7l3 4 5-9" stroke={GOLD} strokeWidth="1.700" /></Svg></button>
          <button aria-label="Help" className="ml-1 flex items-center gap-px">
            <span className="flex h-[14px] w-[14px] items-center justify-center rounded-full bg-[#4a95f5] font-bold text-white">?</span>
            <Caret color="#222" w={5} />
          </button>
        </div>
      </div>
    </header>
  );
}

/* ---------- 3D view ---------- */

function Scene() {
  return (
    <svg width="1819" height="1217" viewBox="30 163 1819 1217" fill="none" className="absolute top-0 left-0" aria-hidden="true">
      <defs>
        <linearGradient id="redShaft" x1="0" x2="1"><stop offset="0" stopColor="#6e1515" /><stop offset=".5" stopColor="#c42a2a" /><stop offset="1" stopColor="#a52020" /></linearGradient>
        <linearGradient id="redHead" x1="0" x2="1"><stop offset="0" stopColor="#5a1010" /><stop offset="1" stopColor="#9c2020" /></linearGradient>
        <linearGradient id="axisX" x1="0" x2="1"><stop offset="0" stopColor="#640000" /><stop offset=".6" stopColor="#d40000" /><stop offset="1" stopColor="#b40000" /></linearGradient>
        <linearGradient id="axisY" x1="0" x2="0" y1="0" y2="1"><stop offset="0" stopColor="#0a8a0a" /><stop offset="1" stopColor="#043c04" /></linearGradient>
        <radialGradient id="cyan" cx=".55" cy=".25" r=".85"><stop offset="0" stopColor="#00e6e6" /><stop offset=".5" stopColor="#00b4b4" /><stop offset="1" stopColor="#005050" /></radialGradient>
        <radialGradient id="navy" cx=".6" cy=".2" r=".9"><stop offset="0" stopColor="#0000e8" /><stop offset="1" stopColor="#00003c" /></radialGradient>
      </defs>
      <path d="M214 765.500L1649 779.500" stroke="#dcdcdc" />
      <path d="M1662 779h13.500l-2 81h-14z" fill="url(#redShaft)" />
      <path d="M1653 859h27l-15 35z" fill="url(#redHead)" />
      <path d="M1653 859h27l-2 3h-23z" fill="#b42626" />
      <path d="M1649 768.500h18l3 6v6l-3 7h-18z" fill="#ff3434" stroke="#111" strokeWidth="1.400" />
      <path d="M1669 776h4v3h-4z" fill="#111" />
      <path d="M1715 1172h7l-3 84h-6z" fill="url(#axisX)" />
      <path d="M1719.500 1148l10 27.500h-21z" fill="url(#axisX)" />
      <path d="M1632 1252h84v7h-84z" fill="url(#axisY)" />
      <path d="M1608 1255l27-10v21z" fill="url(#axisY)" />
      <circle cx="1676" cy="1213" r="11" fill="url(#cyan)" />
      <circle cx="1730" cy="1268" r="11" fill="url(#navy)" />
      <path d="M1714 1254h4l22 13-4 5-18-11z" fill="#0000c8" />
      <path d="M1735 1265.500h7l-7 9h7" stroke="#1010d0" />
      <path d="M1719.500 1124l7 8m0-8l-7 8" stroke="#f03030" />
      <path d="M1590.500 1246l3.500 4 3.500-4m-3.500 4v5" stroke="#20a040" />
    </svg>
  );
}

function ScaleBar() {
  return (
    <div className="absolute inset-x-0 bottom-[22px] flex justify-center pr-px leading-4 text-black">
      <div className="w-[592px]">
        <div className="grid grid-cols-4">
          <span className="-ml-[14px]">0,000</span>
          <span />
          <span className="-ml-[14px]">0,030</span>
          <span className="-mr-8 text-right">0,060 (m)</span>
        </div>
        <div className="grid h-[23px] grid-cols-4 border border-black">
          <span className="bg-black" />
          <span />
          <span className="bg-black" />
          <span />
        </div>
        <div className="mt-[15px] grid grid-cols-4">
          <span />
          <span className="-ml-[14px]">0,015</span>
          <span />
          <span className="-ml-[14px]">0,045</span>
        </div>
      </div>
    </div>
  );
}

function Viewport() {
  return (
    <main className="relative min-h-0 flex-1 overflow-hidden bg-gradient-to-b from-[#6b8bdd] to-white">
      <Scene />
      <div className="relative flex items-start justify-between pt-[14px] pr-[23px] pl-[15px] leading-[15px] text-black">
        <div>
          <p className="font-bold">A: Static Structural</p>
          <p>Force</p>
          <p>Time: 1, s</p>
          <p>12.07.2020 15:59</p>
          <div className="mt-[15px] flex gap-[5px]">
            <span className="mt-px h-4 w-4 border border-black bg-[#ff3434]" />
            <div className="font-['Noto_Sans',sans-serif]">
              <p>Force: 10, N</p>
              <p>Components: -10,;0,;0, N</p>
            </div>
          </div>
        </div>
        <div className="flex flex-col items-end text-white">
          <p className="text-2xl leading-6 font-extrabold">ANSYS</p>
          <p className="font-['Roboto',sans-serif] text-[17px] leading-[20px]">2020 <b>R1</b></p>
          <p className="mt-1 border-t border-white pt-1 font-['Roboto',sans-serif] text-sm tracking-widest">ACADEMIC</p>
        </div>
      </div>
      <ScaleBar />
    </main>
  );
}

/* ---------- docked panels ---------- */

function PanelHeader({ title, maximize }: { title: string; maximize?: boolean }) {
  const id = title.replace(/\W/g, "");
  return (
    <div className="flex h-5 shrink-0 items-center gap-2 border-x border-t border-[#c9c9d9] bg-[#eeeef2] pr-2 pb-px pl-1 text-[#444]">
      <h2 className="-mr-1 whitespace-nowrap">{title}</h2>
      <svg height="5" className="min-w-0 flex-1" aria-hidden="true">
        <pattern id={id} width="4" height="4" patternUnits="userSpaceOnUse">
          <path d="M0 0h1v1H0zM2 2h1v1H2z" fill="#9a9aa0" />
        </pattern>
        <rect width="100%" height="5" fill={`url(#${id})`} />
      </svg>
      <button aria-label="Menu"><Caret color="#1e1e1e" w={8} /></button>
      <button aria-label="Pin"><Svg w={8} h={12}><path d="M2 1h4v6H2zM0 7.500h8M4 8v4M5.500 1v6" stroke="#1e1e1e" strokeWidth="1.300" /></Svg></button>
      {maximize && <button aria-label="Maximize"><Svg w={11} h={10}><path d="M.5 1h10v8.500H.5z" stroke="#1e1e1e" strokeWidth="1.200" /></Svg></button>}
      <button aria-label="Close"><Svg w={9}><path d="M1 1l7 7M8 1L1 8" stroke="#1e1e1e" strokeWidth="2" /></Svg></button>
    </div>
  );
}

const axes = [
  { name: "X [N]", color: "text-[#d01020]" },
  { name: "Y [N]", color: "text-[#109020]" },
  { name: "Z [N]", color: "text-[#1010e0]" },
];
const rows = [
  ["1", "1", "0,", "= 0,", "= 0,", "= 0,"],
  ["2", "1", "1,", "-10,", "0,", "0,"],
  ["*", "", "", "", "", ""],
];

function TabularData() {
  return (
    <section className="flex h-[595px] shrink-0 flex-col bg-[#a0a0a0]">
      <PanelHeader title="Tabular Data" maximize />
      <table className="w-[251px] table-fixed border-separate border-spacing-0 bg-white leading-[14px] whitespace-nowrap text-black">
        <colgroup>
          <col className="w-[15px]" /><col className="w-[37px]" /><col className="w-[47px]" />
          <col className="w-[51px]" /><col className="w-[50px]" /><col className="w-[51px]" />
        </colgroup>
        <thead>
          <tr className="h-[18px] bg-[#f0f0f0] text-left">
            <th className="border-r border-b border-[#707070]" />
            <th className="border-r border-b border-[#707070] pl-[3px] font-normal">Steps</th>
            <th className="border-r border-b border-[#707070] pl-0.5 font-normal">Time [s]</th>
            {axes.map((a) => (
              <th key={a.name} className="border-r border-b border-[#707070] pl-[3px] font-normal">
                <label className={`flex items-center gap-1 ${a.color}`}>
                  <span className="grid h-[14px] w-[14px] place-items-center">
                    <input type="checkbox" defaultChecked className="col-start-1 row-start-1 h-[14px] w-[14px] appearance-none border border-t-[#707070] border-r-[#d8d8d8] border-b-[#d8d8d8] border-l-[#707070] bg-white" />
                    <span className="pointer-events-none col-start-1 row-start-1"><Svg w={8}><path d="M1 3l2.500 3L7 1" stroke="#000" strokeWidth="2" /></Svg></span>
                  </span>
                  {a.name}
                </label>
              </th>
            ))}
          </tr>
        </thead>
        <tbody>
          {rows.map((r) => (
            <tr key={r[0]} className="h-[15px]">
              {r.map((c, i) => (
                <td key={i} className={`h-[15px] border-r border-b p-0 pl-[3px] ${i < 2 ? "border-[#707070] bg-[#f0f0f0]" : "border-[#c0c0c0]"}`}>{c}</td>
              ))}
            </tr>
          ))}
        </tbody>
      </table>
    </section>
  );
}

const ticks = ["0,", "-1,25", "-2,5", "-3,75", "-5,", "-6,25", "-7,5", "-8,75", "-10,"];

function GraphPanel() {
  return (
    <section className="flex min-h-0 flex-1 flex-col bg-white">
      <PanelHeader title="Graph" maximize />
      <svg viewBox="0 0 280 623" className="min-h-0 w-full flex-1" fill="none" fontSize="11" fontFamily="Open Sans, sans-serif" role="img" aria-label="Force against time">
        <path d="M57.500 24v534" stroke="#dedede" />
        {ticks.map((t, i) => {
          const y = 24 + Math.round(i * 66.75);
          return (
            <g key={t}>
              <path d={`M50 ${y}.5h7`} stroke="#a8a8a8" />
              <text x="46" y={y + 6} textAnchor="end" fill="#111">{t}</text>
            </g>
          );
        })}
        <path d="M57 24.500h200M57 558.500h200M256.500 558v6" stroke="#a8a8a8" />
        <path d="M256.500 19v540" stroke="#000" strokeWidth="3" />
        <path d="M58 24.500h198" stroke="#0000d8" strokeDasharray="4 2" />
        <path d="M58 24L256 558" stroke="#c00000" strokeWidth="1" strokeDasharray="3 3" />
        <path d="M55.500 22.500h4v4h-4z" fill="#fff" stroke="#0000d8" />
        <path d="M255 23h3v3h-3z" fill="#0000d8" />
        <path d="M255 557h3v3h-3z" fill="#c00000" />
        <text x="256" y="14" textAnchor="end" fontWeight="700" fill="#111">1,</text>
        <text x="256" y="579" textAnchor="end" fill="#111">1,</text>
        <path d="M57.500 596.500h199v14h-199z" fill="#0078d7" stroke="#999" />
        <text x="157" y="608" textAnchor="middle" fill="#fff">1</text>
      </svg>
    </section>
  );
}

type Detail = { name: string; value?: string; head?: boolean; check?: boolean; shaded?: boolean };
const details: Detail[] = [
  { name: "Scope", head: true },
  { name: "Scoping Method", value: "Geometry Selection" },
  { name: "Geometry", value: "1 Vertex" },
  { name: "Definition", head: true },
  { name: "Type", value: "Force", shaded: true },
  { name: "Define By", value: "Components" },
  { name: "Applied By", value: "Surface Effect" },
  { name: "Coordinate System", value: "Global Coordinate System" },
  { name: "X Component", value: "-10, N  (ramped)", check: true },
  { name: "Y Component", value: "0, N  (ramped)", check: true },
  { name: "Z Component", value: "0, N  (ramped)", check: true },
  { name: "Suppressed", value: "No" },
];

function Details() {
  return (
    <section className="flex min-w-0 flex-1 flex-col bg-white">
      <PanelHeader title={'Details of "Force"'} />
      <table className="w-full table-fixed border-separate border-spacing-0 whitespace-pre text-black">
        <colgroup><col className="w-[13px]" /><col className="w-[105px]" /><col /></colgroup>
        <tbody>
          {details.map((d) => (
            <tr key={d.name} className="leading-[17px]">
              <td className="h-[18px] p-0">
                {d.head && (
                  <button aria-label={`Collapse ${d.name}`} className="ml-0.5 block">
                    <Svg w={9}><path d="M.5.5h8v8h-8zM2 4.500h5" stroke="#555" /></Svg>
                  </button>
                )}
              </td>
              {d.head ? (
                <td colSpan={2} className="h-[18px] border-x border-b border-[#a0a0a0] p-0 pl-[3px] font-bold">{d.name}</td>
              ) : (
                <>
                  <td className="h-[18px] border-x border-b border-[#a0a0a0] p-0 pl-[3px]">
                    {d.check ? (
                      <label className="flex items-center gap-1">
                        <input type="checkbox" className="h-3 w-3 appearance-none border border-[#c0c0c0] bg-white" />
                        {d.name}
                      </label>
                    ) : d.name}
                  </td>
                  <td className={`h-[18px] border-r border-b border-[#a0a0a0] p-0 pl-[3px] ${d.shaded ? "bg-[#e6e5e1]" : ""}`}>{d.value}</td>
                </>
              )}
            </tr>
          ))}
        </tbody>
      </table>
    </section>
  );
}

/* ---------- status + task bars ---------- */

function StatusBar() {
  return (
    <footer className="flex h-5 shrink-0 items-center justify-end bg-[#007acc] pr-2 text-xs whitespace-nowrap text-white">
      <span className="mr-4 flex items-center gap-0.5">
        <Svg w={16}>
          <path d="M1 5h13v7H7l-3 3-1-3H1z" fill="#f5d04a" stroke="#b08a10" />
          <ellipse cx="10" cy="5" rx="2.600" ry="4" fill="#f5d04a" stroke="#222" strokeWidth="1.500" />
        </Svg>
        No Messages
      </span>
      <span className="mr-5">No Selection</span>
      <span className="mr-[11px] flex items-center gap-1.5">
        <Svg w={8} h={5}><path d="M0 5l4-5 4 5z" fill="#fff" /></Svg>
        Metric (m, kg, N, s, V, A)
      </span>
      <span className="mr-[11px]">Degrees</span>
      <span className="mr-[11px]">rad/s</span>
      <span>Celsius</span>
    </footer>
  );
}

function Office({ letter, dark, mid, light, round }: { letter: string; dark: string; mid: string; light: string; round?: boolean }) {
  return (
    <Svg w={26}>
      {round ? (
        <>
          <circle cx="14" cy="13" r="12" fill={mid} />
          <path d="M14 1a12 12 0 0 1 12 12H14z" fill={light} />
        </>
      ) : (
        <>
          <rect x="6" y="1" width="19" height="24" rx="1.500" fill={mid} />
          <path d="M7 1h17q1 0 1 1v5H6V2q0-1 1-1z" fill={light} />
          <path d="M6 19h19v5q0 1-1 1H7q-1 0-1-1z" fill={dark} />
        </>
      )}
      <rect x="0" y="6" width="14" height="14" rx="1.500" fill={dark} />
      <text x="7" y="17" textAnchor="middle" fontSize="11" fontWeight="700" fill="#fff" fontFamily="Open Sans, sans-serif">{letter}</text>
    </Svg>
  );
}

function Workbench({ text, bg, shade }: { text: string; bg: string; shade: string }) {
  return (
    <Svg w={24} h={28}>
      <path d="M0 0h24v28H0z" fill={bg} />
      <path d="M8 0L0 28h9l4-16zM16 0l8 28h-9L8 0z" fill={shade} />
      <text x="12" y="19" textAnchor="middle" fontSize="12" fontWeight="700" fill="#fff" fontFamily="Open Sans, sans-serif">{text}</text>
    </Svg>
  );
}

const EdgeIcon = () => (
  <Svg w={24} vb="0 0 24 26">
    <path d="M2 12C3 5 7 1 13 1c6 0 10 4 10 10v4H9c0 4 3 6 7 6 2 0 4-.600 6-1.600v4.600c-2 1-5 1.500-7 1.500-6 0-10-4-10-9 0-4 2-6 5-7.500-1 1-1.500 2-1.600 3.500H16c0-3-1.500-5-5-5-4 0-7 2-9 4.500z" fill="#0a7cdc" />
  </Svg>
);
const ExplorerIcon = () => (
  <Svg w={24}>
    <path d="M1 2h9l2 2h11v18H1z" fill="#fdd564" />
    <path d="M1 2h9l2 3H1z" fill="#d99a1c" />
    <path d="M5 22v-9q0-1 1-1h12q1 0 1 1v9h-4v-5H9v5z" fill="#4a9de0" />
  </Svg>
);
const StoreIcon = () => (
  <Svg w={24} h={28}>
    <path d="M8 7V4a4 4 0 0 1 8 0v3" stroke="#fff" strokeWidth="1.600" />
    <path d="M1 7h22v18q0 2-2 2H3q-2 0-2-2z" fill="#fff" />
    <path d="M6.500 11h5v5h-5z" fill="#f25022" /><path d="M12.500 11h5v5h-5z" fill="#7fba00" />
    <path d="M6.500 17h5v5h-5z" fill="#00a4ef" /><path d="M12.500 17h5v5h-5z" fill="#ffb900" />
  </Svg>
);
const OperaIcon = () => (
  <Svg w={24} h={28}>
    <ellipse cx="12" cy="14" rx="8.500" ry="11.500" stroke="#e8102a" strokeWidth="5" />
    <path d="M12 2.500c5 0 8.500 5 8.500 11.500S17 25.500 12 25.500" stroke="#f8404c" strokeWidth="5" />
  </Svg>
);
const OneNoteIcon = () => (
  <Svg w={24} h={26}>
    <path d="M13 4h10v18H13z" fill="#fff" stroke="#80397b" />
    <path d="M16 8h5M16 11h5M16 14h5M16 17h5" stroke="#80397b" />
    <path d="M1 3l13-3v26L1 23z" fill="#80397b" />
    <text x="7" y="18" textAnchor="middle" fontSize="12" fontWeight="700" fill="#fff" fontFamily="Open Sans, sans-serif">N</text>
  </Svg>
);
const OutlookIcon = () => (
  <Svg w={26}>
    <path d="M8 1h16v14H8z" fill="#1590e0" />
    <path d="M16 1h8v7h-8z" fill="#50d9ff" />
    <path d="M8 1h8v7H8z" fill="#28a8ea" />
    <path d="M5 12l10 6 10-6v13H6q-1 0-1-1z" fill="#1490df" />
    <path d="M5 25l20-13v12q0 1-1 1z" fill="#28b0f0" />
    <rect x="0" y="6" width="14" height="14" rx="1.500" fill="#0f6cbd" />
    <text x="7" y="17" textAnchor="middle" fontSize="11" fontWeight="700" fill="#fff" fontFamily="Open Sans, sans-serif">O</text>
  </Svg>
);
const QbIcon = () => (
  <Svg w={24} h={26}>
    <defs>
      <linearGradient id="qb" x1="0" x2="0" y1="0" y2="1"><stop offset="0" stopColor="#c6d8ee" /><stop offset=".6" stopColor="#5a8fd0" /><stop offset="1" stopColor="#3a6fb8" /></linearGradient>
    </defs>
    <circle cx="12" cy="13" r="11" fill="url(#qb)" stroke="#dfe9f5" strokeWidth="1.500" />
    <text x="12" y="18" textAnchor="middle" fontSize="14" fill="#fff" fontFamily="Open Sans, sans-serif">qb</text>
  </Svg>
);
const TelegramIcon = () => (
  <Svg w={28} h={30}>
    <circle cx="13" cy="13" r="11" fill="#2fa6df" />
    <path d="M6 13l14-6-3 13-4-3-2 2-1-4 6-6-7 5z" fill="#fff" />
    <rect x="12" y="18" width="16" height="12" rx="2" fill="#8d8f92" />
    <text x="20" y="27" textAnchor="middle" fontSize="9" fill="#fff" fontFamily="Open Sans, sans-serif">..15</text>
  </Svg>
);
const VlcIcon = () => (
  <Svg w={22} h={28}>
    <path d="M10 1h2l6 20H4z" fill="#f58a1c" />
    <path d="M8.500 7h5l1.200 4H7.300zM6 15h10l1 4H5z" fill="#f2f2f2" />
    <path d="M4 20H2l-1 6h20l-1-6h-2q-7 4-14 0z" fill="#f58a1c" />
  </Svg>
);
const VisioIcon = () => (
  <Svg w={26}>
    <path d="M15 0l6 6-6 6-6-6z" fill="#3a8ee8" />
    <path d="M13 6h11v12H13z" fill="#2f7dd8" />
    <path d="M14 14l6 6-6 6-6-6z" fill="#1b5fbe" />
    <rect x="1" y="6" width="13" height="14" rx="1.500" fill="#185abd" />
    <text x="7.500" y="17" textAnchor="middle" fontSize="11" fontWeight="700" fill="#fff" fontFamily="Open Sans, sans-serif">V</text>
  </Svg>
);

type App = { name: string; icon: React.ReactNode; open?: boolean; active?: boolean };
const apps: App[] = [
  { name: "Edge", icon: <EdgeIcon /> },
  { name: "Explorer", icon: <ExplorerIcon />, open: true },
  { name: "Store", icon: <StoreIcon /> },
  { name: "Opera", icon: <OperaIcon />, open: true },
  { name: "Excel", icon: <Office letter="X" dark="#107c41" mid="#21a366" light="#33c481" /> },
  { name: "OneNote", icon: <OneNoteIcon /> },
  { name: "Outlook", icon: <OutlookIcon /> },
  { name: "PowerPoint", icon: <Office letter="P" dark="#c43e1c" mid="#e0603e" light="#ff8f6b" round /> },
  { name: "Word", icon: <Office letter="W" dark="#185abd" mid="#2b7cd3" light="#41a5ee" />, open: true },
  { name: "qBittorrent", icon: <QbIcon /> },
  { name: "Telegram", icon: <TelegramIcon />, open: true },
  { name: "VLC", icon: <VlcIcon /> },
  { name: "Visio", icon: <VisioIcon /> },
  { name: "Workbench", icon: <Workbench text="WB" bg="#c2c2c2" shade="#8f8f8f" /> },
  { name: "Workbench project", icon: <Workbench text="WB" bg="#c2c2c2" shade="#8f8f8f" />, open: true },
  { name: "Mechanical", icon: <Workbench text="M" bg="#7b4a88" shade="#4a2857" />, open: true, active: true },
];

function Taskbar() {
  return (
    <div className="flex h-10 shrink-0 items-stretch bg-[linear-gradient(90deg,#1d1d1f_0%,#1f1d1f_29%,#302922_33%,#2b2723_36%,#1c1d20_42%,#191a1d_52%,#231f1c_66%,#37301f_74%,#3f3929_81%,#452e26_86%,#43251f_90%,#2a2224_94%,#1b2024_98%,#1c2226_100%)] text-white">
      <button aria-label="Start" className="flex w-12 items-center justify-center">
        <Svg w={17}><path d="M0 2.500L7.500 1.500V8H0zM8.500 1.300L17 0v8H8.500zM0 9h7.500v6.500L0 14.500zM8.500 9H17v8l-8.500-1.200z" fill="#fff" /></Svg>
      </button>
      <label className="flex w-[344px] items-center gap-3 border border-[#bdbdbd] bg-[#f2f2f2] pl-[11px] text-[#222]">
        <Svg w={17}><circle cx="11" cy="6" r="5" stroke="#222" strokeWidth="1.300" /><path d="M7.500 9.500L1 16" stroke="#222" strokeWidth="1.500" /></Svg>
        <input aria-label="Поиск" placeholder="Введите здесь текст для поиска" className="min-w-0 flex-1 bg-transparent text-sm placeholder:text-[#333]" />
      </label>
      <button aria-label="Task view" className="flex w-[50px] items-center justify-center">
        <Svg w={17} h={18}><path d="M1 1v2h10V1M1 6h10v7H1zM1 18v-2h10v2M15 1v3m0 5v9" stroke="#fff" strokeWidth="1.400" /><path d="M13.500 5h3v3h-3z" fill="#fff" /></Svg>
      </button>
      {apps.map((a) => (
        <button key={a.name} aria-label={a.name} className={`flex w-[49px] flex-col items-center ${a.active ? "bg-[#4c4d50]" : ""}`}>
          <span className="flex flex-1 items-center">{a.icon}</span>
          <span className={`h-0.5 ${a.open ? "bg-[#fce8a6]" : "bg-transparent"} ${a.active ? "w-full" : "w-10"}`} />
        </button>
      ))}
      <div className="ml-auto flex items-center">
        <button aria-label="Show hidden icons" className="mr-2.5"><Svg w={14} h={10}><path d="M1 8l6-6 6 6" stroke="#fff" strokeWidth="1.400" /></Svg></button>
        <span className="mr-2"><Svg w={17} h={12}><path d="M4 11a3 3 0 0 1 0-6 5 5 0 0 1 9 0 3 3 0 0 1 0 6z" fill="#fff" /><path d="M4 5a5 5 0 0 1 8-1L5 8z" fill="#aaa" /></Svg></span>
        <span className="mr-2"><Svg w={17} h={15}><path d="M4 3h12v8H5V6M10 11v3M7 14h6M1 1h4v4H1zM3 5v9" stroke="#fff" strokeWidth="1.200" /></Svg></span>
        <span className="mr-3"><Svg w={17} h={14}><path d="M1 5h2l3-3v10L3 9H1zM9 5q1.500 2 0 4M11.500 3q3 4 0 8M14 1q4.500 6 0 12" stroke="#fff" strokeWidth="1.200" /></Svg></span>
        <span className="mr-3.5 text-xs">FIN</span>
        <span className="flex w-[54px] flex-col items-center leading-[18px]"><span>15:59</span><span>12.07.2020</span></span>
        <button aria-label="Notifications" className="mr-3 ml-[17px]">
          <Svg w={25} h={26}>
            <path d="M0 2h16v12H8l-4 4v-4H0z" fill="#fff" />
            <path d="M3 5.500h10M3 8h10M3 10.500h6" stroke="#333" />
            <circle cx="16" cy="17" r="8" fill="#33373b" stroke="#9a9a9a" />
            <text x="16" y="21" textAnchor="middle" fontSize="11" fill="#fff" fontFamily="Open Sans, sans-serif">3</text>
          </Svg>
        </button>
        <span className="h-10 w-[5px] border-l border-[#777]" />
      </div>
    </div>
  );
}

export default function App() {
  return (
    <div className="flex h-screen min-h-[720px] w-full flex-col overflow-hidden bg-[#eeeef2] font-['Open_Sans','Noto_Sans',sans-serif] text-[11px] leading-4">
      <Header />
      <Ribbon />
      <div className="flex min-h-0 flex-1">
        <aside className="w-[29px] shrink-0 bg-[#eeeef2] pt-2 pl-2.5 text-[#444]">
          <button className="[writing-mode:vertical-rl]">Outline</button>
        </aside>
        <div className="flex min-w-0 flex-1 flex-col">
          <Toolbar />
          <Viewport />
        </div>
        <div className="ml-1 flex w-[280px] shrink-0 flex-col gap-1">
          <TabularData />
          <GraphPanel />
        </div>
        <div className="ml-1 flex w-[424px] shrink-0"><Details /></div>
      </div>
      <StatusBar />
      <Taskbar />
    </div>
  );
}
